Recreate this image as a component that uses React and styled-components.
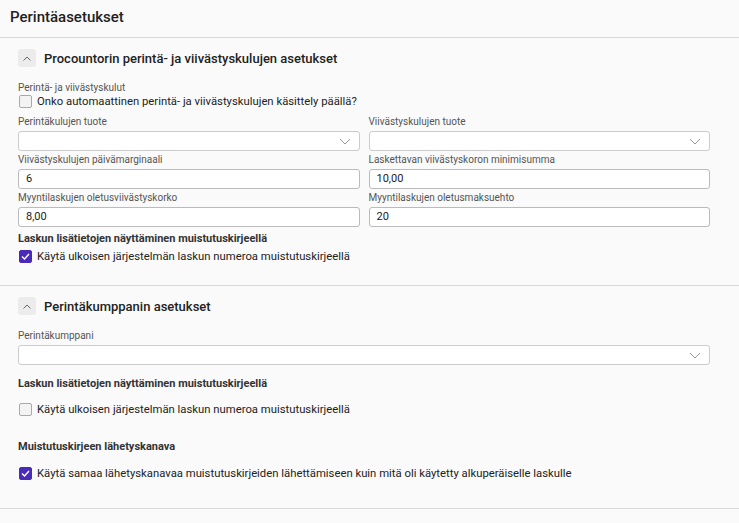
import React from "react";
import styled, { createGlobalStyle } from "styled-components";

const GlobalStyle = createGlobalStyle`
  html, body {
    margin: 0;
    padding: 0;
    background: #fafafa;
    font-family: Roboto, "Liberation Sans", sans-serif;
    color: #222;
  }
  * { box-sizing: border-box; }
`;

function ChevronUp() {
  return (
    <svg width="8" height="5" viewBox="0 0 8 5">
      <path d="M0.5 4.5 L4 1 L7.5 4.5" fill="none" stroke="#666" strokeWidth="1" />
    </svg>
  );
}

function Check() {
  return (
    <svg width="9" height="7" viewBox="0 0 9 7">
      <path d="M1 3.5 L3.5 6 L8 1" fill="none" stroke="#fff" strokeWidth="1.4" />
    </svg>
  );
}

function Checkbox({ checked, label }) {
  return (
    <CheckRow>
      <Box checked={checked}>{checked && <Check />}</Box>
      <span>{label}</span>
    </CheckRow>
  );
}

function Select({ label }) {
  return (
    <Field>
      <Label>{label}</Label>
      <SelectBox>
        <svg width="12" height="7" viewBox="0 0 12 7">
          <path d="M1 1 L6 6 L11 1" fill="none" stroke="#999" strokeWidth="1" />
        </svg>
      </SelectBox>
    </Field>
  );
}

function Input({ label, value }) {
  return (
    <Field>
      <Label>{label}</Label>
      <InputBox>{value}</InputBox>
    </Field>
  );
}

export default function App() {
  return (
    <>
      <GlobalStyle />
      <Page>
        <Header>Perintäasetukset</Header>

        <Section bottom={22}>
          <SectionHead>
            <Toggle><ChevronUp /></Toggle>
            <SectionTitle>Procountorin perintä- ja viivästyskulujen asetukset</SectionTitle>
          </SectionHead>
          <Label>Perintä- ja viivästyskulut</Label>
          <Checkbox label="Onko automaattinen perintä- ja viivästyskulujen käsittely päällä?" />
          <Grid>
            <Select label="Perintäkulujen tuote" />
            <Select label="Viivästyskulujen tuote" />
            <Input label="Viivästyskulujen päivämarginaali" value="6" />
            <Input label="Laskettavan viivästyskoron minimisumma" value="10,00" />
            <Input label="Myyntilaskujen oletusviivästyskorko" value="8,00" />
            <Input label="Myyntilaskujen oletusmaksuehto" value="20" />
          </Grid>
          <Group top={5} gap={3}>
            <Subhead>Laskun lisätietojen näyttäminen muistutuskirjeellä</Subhead>
            <Checkbox checked label="Käytä ulkoisen järjestelmän laskun numeroa muistutuskirjeellä" />
          </Group>
        </Section>

        <Section bottom={28}>
          <SectionHead>
            <Toggle><ChevronUp /></Toggle>
            <SectionTitle>Perintäkumppanin asetukset</SectionTitle>
          </SectionHead>
          <Select label="Perintäkumppani" />
          <Group top={12} gap={11}>
            <Subhead>Laskun lisätietojen näyttäminen muistutuskirjeellä</Subhead>
            <Checkbox label="Käytä ulkoisen järjestelmän laskun numeroa muistutuskirjeellä" />
          </Group>
          <Group top={24} gap={12}>
            <Subhead>Muistutuskirjeen lähetyskanava</Subhead>
            <Checkbox checked label="Käytä samaa lähetyskanavaa muistutuskirjeiden lähettämiseen kuin mitä oli käytetty alkuperäiselle laskulle" />
          </Group>
        </Section>
      </Page>
    </>
  );
}

const Page = styled.div`
  width: 739px;
  min-height: 523px;
  background: #fafafa;
`;

const Header = styled.div`
  height: 38px;
  padding: 8px 10px 0;
  font-size: 15px;
  font-weight: 500;
  color: #222;
  border-bottom: 1px solid #d8d8d8;
`;

const Section = styled.section`
  padding: 11px 29px ${(p) => p.bottom}px 18px;
  border-bottom: 1px solid #d8d8d8;
`;

const SectionHead = styled.div`
  display: flex;
  align-items: center;
  gap: 8px;
  height: 18px;
  margin-bottom: 14px;
`;

const Toggle = styled.div`
  width: 18px;
  height: 18px;
  border-radius: 3px;
  background: #ececec;
  display: flex;
  align-items: center;
  justify-content: center;
`;

const SectionTitle = styled.h2`
  margin: 0;
  font-size: 13px;
  font-weight: 500;
  color: #222;
`;

const Label = styled.div`
  font-size: 10px;
  color: #555;
  line-height: 13px;
`;

const CheckRow = styled.label`
  display: flex;
  align-items: center;
  gap: 5px;
  height: 14px;
  font-size: 11.3px;
  color: #222;
  margin-left: 1px;
`;

const Box = styled.span`
  width: 13px;
  height: 13px;
  border-radius: 2px;
  flex-shrink: 0;
  display: flex;
  align-items: center;
  justify-content: center;
  background: ${(p) => (p.checked ? "#4a2ab8" : "#f3f3f3")};
  border: 1px solid ${(p) => (p.checked ? "#4a2ab8" : "#aaa")};
`;

const Grid = styled.div`
  display: grid;
  grid-template-columns: 1fr 1fr;
  column-gap: 9px;
  row-gap: 2px;
  margin-top: 7px;
`;

const Field = styled.div`
  display: flex;
  flex-direction: column;
  gap: 3px;
`;

const SelectBox = styled.div`
  height: 20px;
  border: 1px solid #ccc;
  border-radius: 3px;
  background: #fff;
  display: flex;
  align-items: center;
  justify-content: flex-end;
  padding-right: 8px;
`;

const InputBox = styled.div`
  height: 20px;
  border: 1px solid #bbb;
  border-radius: 3px;
  background: #fff;
  font-size: 11px;
  line-height: 18px;
  padding: 0 7px;
  color: #222;
`;

const Subhead = styled.div`
  font-size: 11px;
  line-height: 14px;
  font-weight: 700;
  color: #333;
`;

const Group = styled.div`
  display: flex;
  flex-direction: column;
  gap: ${(p) => p.gap}px;
  margin-top: ${(p) => p.top}px;
`;
